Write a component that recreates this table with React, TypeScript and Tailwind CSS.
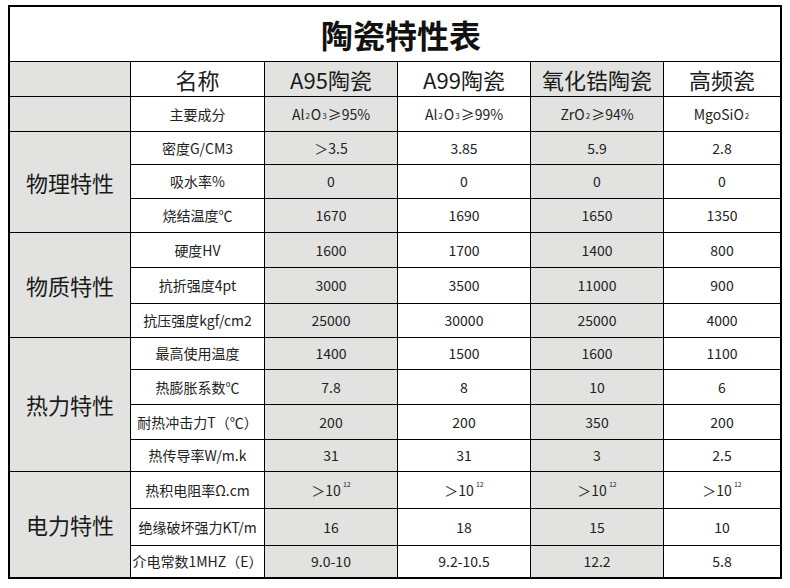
import React from 'react'

type Row = { name: React.ReactNode; vals: React.ReactNode[] }
type Group = { label: string; rows: Row[] }

const Sub = ({ children }: { children: React.ReactNode }) => (
  <span className="text-[8px] mx-[1px] relative top-[2px]">{children}</span>
)

const Pow = () => (
  <>
    ＞10<span className="text-[7px] relative -top-[6px] ml-[2px]">12</span>
  </>
)

const groups: Group[] = [
  {
    label: '物理特性',
    rows: [
      { name: '密度G/CM3', vals: ['＞3.5', '3.85', '5.9', '2.8'] },
      { name: '吸水率%', vals: ['0', '0', '0', '0'] },
      { name: '烧结温度℃', vals: ['1670', '1690', '1650', '1350'] },
    ],
  },
  {
    label: '物质特性',
    rows: [
      { name: '硬度HV', vals: ['1600', '1700', '1400', '800'] },
      { name: '抗折强度4pt', vals: ['3000', '3500', '11000', '900'] },
      { name: '抗压强度kgf/cm2', vals: ['25000', '30000', '25000', '4000'] },
    ],
  },
  {
    label: '热力特性',
    rows: [
      { name: '最高使用温度', vals: ['1400', '1500', '1600', '1100'] },
      { name: '热膨胀系数℃', vals: ['7.8', '8', '10', '6'] },
      { name: '耐热冲击力T（℃）', vals: ['200', '200', '350', '200'] },
      { name: '热传导率W/m.k', vals: ['31', '31', '3', '2.5'] },
    ],
  },
  {
    label: '电力特性',
    rows: [
      { name: '热积电阻率Ω.cm', vals: [<Pow />, <Pow />, <Pow />, <Pow />] },
      { name: '绝缘破坏强力KT/m', vals: ['16', '18', '15', '10'] },
      { name: '介电常数1MHZ（E）', vals: ['9.0-10', '9.2-10.5', '12.2', '5.8'] },
    ],
  },
]

const span: Record<number, string> = { 3: 'row-span-3', 4: 'row-span-4' }
const gray = 'bg-[#e2e3e1]'
const valBg = [gray, 'bg-white', gray, 'bg-white']

export default function App() {
  return (
    <div className="bg-white w-[790px] h-[588px] pt-[5px] pl-[8px]" style={{ fontFamily: '"Noto Sans CJK SC", "Noto Sans", sans-serif' }}>
      <div className="inline-grid bg-black p-[2px] gap-px grid-cols-[120px_133px_132px_132px_132px_116px] grid-rows-[54px_34px_34px_32px_33px_33px_34px_35px_33px_31px_34px_34px_31px_36px_36px_31px] text-[#222]">
        <div className="col-span-6 bg-white flex items-center justify-center pl-3 text-[32px] font-bold text-[#111]">
          陶瓷特性表
        </div>

        <div className={gray} />
        {['名称', 'A95陶瓷', 'A99陶瓷', '氧化锆陶瓷', '高频瓷'].map((h, i) => (
          <div
            key={h}
            className={`${i === 0 ? 'bg-white' : valBg[i - 1]} flex items-center justify-center text-[22px] text-[#1a1a1a]`}
          >
            {h}
          </div>
        ))}

        <div className={gray} />
        <div className="bg-white flex items-center justify-center text-[14px]">主要成分</div>
        <div className={`${gray} flex items-center justify-center text-[14px]`}>
          Al<Sub>2</Sub>O<Sub>3</Sub>≥95%
        </div>
        <div className="bg-white flex items-center justify-center text-[14px]">
          Al<Sub>2</Sub>O<Sub>3</Sub>≥99%
        </div>
        <div className={`${gray} flex items-center justify-center text-[14px]`}>
          ZrO<Sub>2</Sub>≥94%
        </div>
        <div className="bg-white flex items-center justify-center text-[14px]">
          MgoSiO<Sub>2</Sub>
        </div>

        {groups.map((g) => (
          <React.Fragment key={g.label}>
            <div className={`${span[g.rows.length]} ${gray} flex items-center justify-center text-[22px] font-normal text-[#1a1a1a]`}>
              {g.label}
            </div>
            {g.rows.map((r, ri) => (
              <React.Fragment key={ri}>
                <div className="bg-white flex items-center justify-center text-[14px] whitespace-nowrap">{r.name}</div>
                {r.vals.map((v, vi) => (
                  <div key={vi} className={`${valBg[vi]} flex items-center justify-center text-[14px]`}>
                    {v}
                  </div>
                ))}
              </React.Fragment>
            ))}
          </React.Fragment>
        ))}
      </div>
    </div>
  )
}
